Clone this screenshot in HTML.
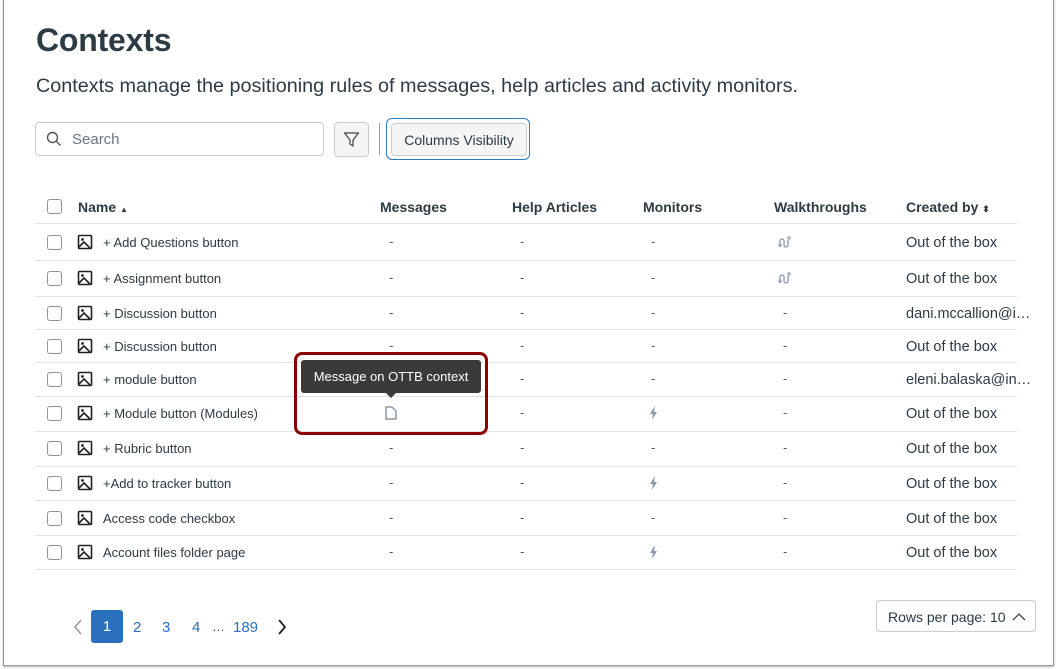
<!DOCTYPE html>
<html><head><style>
body{margin:0;width:1061px;height:669px;background:#fff;font-family:"Liberation Sans",sans-serif;color:#2d3b45;position:relative;overflow:hidden}
.frame{position:absolute;left:3px;top:-2px;width:1049px;height:667px;border:1px solid #9a9a9a;border-top:none;box-shadow:0 1px 2px rgba(0,0,0,.3)}
.a{position:absolute}
h1{position:absolute;left:36px;top:22px;margin:0;font-size:32px;font-weight:bold;color:#2d3b45;letter-spacing:-0.2px}
.sub{left:36px;top:75px;font-size:19.8px;color:#2d3b45}
.search{left:35px;top:122px;width:287px;height:32px;border:1px solid #c7cdd1;border-radius:4px}
.btn{border:1px solid #c7cdd1;border-radius:4px;background:#f5f5f5}
.hd{font-size:14px;font-weight:bold;top:199px}
.line{position:absolute;left:35px;width:982px;height:1px;background:#e0e3e6}
.cb{position:absolute;left:47px;width:13px;height:13px;border:1px solid #8b969e;border-radius:3px;background:#fff}
.txt{position:absolute;font-size:13px;color:#2d3b45}
.dash{position:absolute;font-size:13px;color:#555}
.cr{position:absolute;left:906px;font-size:14.5px;color:#2d3b45;white-space:nowrap;overflow:hidden;text-overflow:ellipsis;max-width:132px}
</style></head><body>
<div class="frame"></div>
<h1>Contexts</h1>
<div class="a sub">Contexts manage the positioning rules of messages, help articles and activity monitors.</div>
<div class="a search"><svg class="a" style="left:10px;top:8px" width="16" height="16" viewBox="0 0 16 16"><circle cx="6.5" cy="6.5" r="5" fill="none" stroke="#555" stroke-width="1.4"/><path d="M10 10l4.5 4.5" stroke="#555" stroke-width="1.4"/></svg><span class="a" style="left:36px;top:8px;font-size:15px;color:#6b7780">Search</span></div>
<div class="a btn" style="left:334px;top:122px;width:33px;height:33px"><svg class="a" style="left:8px;top:8px" width="17" height="17" viewBox="0 0 17 17"><path d="M1.5 2h14l-5.5 7v6l-3-2V9z" fill="none" stroke="#444" stroke-width="1.2" stroke-linejoin="round"/></svg></div>
<div class="a" style="left:379px;top:123px;width:1px;height:32px;background:#999"></div>
<div class="a" style="left:386px;top:118px;width:142px;height:40px;border:1.5px solid #2b7abc;border-radius:6px"></div>
<div class="a btn" style="left:391px;top:123px;width:134px;height:31px;font-size:14px;line-height:32px;text-align:center;color:#2d3b45">Columns Visibility</div>

<div class="cb" style="top:199px"></div>
<div class="a hd" style="left:78px">Name <span style="font-size:8px">▲</span></div>
<div class="a hd" style="left:380px">Messages</div>
<div class="a hd" style="left:512px">Help Articles</div>
<div class="a hd" style="left:643px">Monitors</div>
<div class="a hd" style="left:774px">Walkthroughs</div>
<div class="a hd" style="left:906px">Created by <span style="font-size:9px">⬍</span></div>

<div class="line" style="top:223px"></div>
<div class="line" style="top:260px"></div>
<div class="line" style="top:296px"></div>
<div class="line" style="top:329px"></div>
<div class="line" style="top:362px"></div>
<div class="line" style="top:396px"></div>
<div class="line" style="top:431px"></div>
<div class="line" style="top:466px"></div>
<div class="line" style="top:500px"></div>
<div class="line" style="top:535px"></div>
<div class="line" style="top:569px"></div>

<svg width="0" height="0" style="position:absolute"><defs><symbol id="img" viewBox="0 0 16 16"><rect x="1.5" y="1.5" width="13" height="13" rx="1" fill="none" stroke="#222" stroke-width="1.6"/><circle cx="5.5" cy="5.5" r="1.4" fill="#222"/><path d="M2 13l5-5 6 6" fill="none" stroke="#222" stroke-width="1.6"/></symbol>
<symbol id="bolt" viewBox="0 0 10 14"><path d="M6 0L1 8h3l-1 6 5-8H5z" fill="#8c96a8"/></symbol>
<symbol id="walk" viewBox="0 0 14 12"><path d="M2 10V5a2 2 0 014 0v4a2 2 0 004 0V4" fill="none" stroke="#8c96a8" stroke-width="1.3"/><circle cx="11" cy="2" r="1.2" fill="none" stroke="#8c96a8"/><path d="M0.5 8.5L2 10.5 3.5 8.5" fill="none" stroke="#8c96a8" stroke-width="1.2"/></symbol></defs></svg>

<div class="cb" style="top:235px"></div><svg class="a" style="left:77px;top:234px" width="16" height="16"><use href="#img"/></svg><div class="txt" style="left:103px;top:235px">+ Add Questions button</div><div class="dash" style="left:389px;top:234px">-</div><div class="dash" style="left:520px;top:234px">-</div><div class="dash" style="left:651px;top:234px">-</div><svg class="a" style="left:778px;top:236px" width="14" height="12"><use href="#walk"/></svg><div class="cr" style="top:235px">Out of the box</div>
<div class="cb" style="top:271px"></div><svg class="a" style="left:77px;top:270px" width="16" height="16"><use href="#img"/></svg><div class="txt" style="left:103px;top:271px">+ Assignment button</div><div class="dash" style="left:389px;top:270px">-</div><div class="dash" style="left:520px;top:270px">-</div><div class="dash" style="left:651px;top:270px">-</div><svg class="a" style="left:778px;top:272px" width="14" height="12"><use href="#walk"/></svg><div class="cr" style="top:271px">Out of the box</div>
<div class="cb" style="top:306px"></div><svg class="a" style="left:77px;top:305px" width="16" height="16"><use href="#img"/></svg><div class="txt" style="left:103px;top:306px">+ Discussion button</div><div class="dash" style="left:389px;top:305px">-</div><div class="dash" style="left:520px;top:305px">-</div><div class="dash" style="left:651px;top:305px">-</div><div class="dash" style="left:783px;top:305px">-</div><div class="cr" style="top:306px">dani.mccallion@instructure.com</div>
<div class="cb" style="top:339px"></div><svg class="a" style="left:77px;top:338px" width="16" height="16"><use href="#img"/></svg><div class="txt" style="left:103px;top:339px">+ Discussion button</div><div class="dash" style="left:389px;top:338px">-</div><div class="dash" style="left:520px;top:338px">-</div><div class="dash" style="left:651px;top:338px">-</div><div class="dash" style="left:783px;top:338px">-</div><div class="cr" style="top:339px">Out of the box</div>
<div class="cb" style="top:372px"></div><svg class="a" style="left:77px;top:371px" width="16" height="16"><use href="#img"/></svg><div class="txt" style="left:103px;top:372px">+ module button</div><div class="dash" style="left:520px;top:371px">-</div><div class="dash" style="left:651px;top:371px">-</div><div class="dash" style="left:783px;top:371px">-</div><div class="cr" style="top:372px">eleni.balaska@instructure.com</div>
<div class="cb" style="top:406px"></div><svg class="a" style="left:77px;top:405px" width="16" height="16"><use href="#img"/></svg><div class="txt" style="left:103px;top:406px">+ Module button (Modules)</div><svg class="a" style="left:385px;top:406px" width="12" height="14" viewBox="0 0 12 14"><path d="M1 1h6l4 4v8H1z" fill="none" stroke="#8c96a8" stroke-width="1.5" stroke-linejoin="round"/></svg><div class="dash" style="left:520px;top:405px">-</div><svg class="a" style="left:649px;top:406px" width="10" height="14"><use href="#bolt"/></svg><div class="dash" style="left:783px;top:405px">-</div><div class="cr" style="top:406px">Out of the box</div>
<div class="cb" style="top:441px"></div><svg class="a" style="left:77px;top:440px" width="16" height="16"><use href="#img"/></svg><div class="txt" style="left:103px;top:441px">+ Rubric button</div><div class="dash" style="left:389px;top:440px">-</div><div class="dash" style="left:520px;top:440px">-</div><div class="dash" style="left:651px;top:440px">-</div><div class="dash" style="left:783px;top:440px">-</div><div class="cr" style="top:441px">Out of the box</div>
<div class="cb" style="top:476px"></div><svg class="a" style="left:77px;top:475px" width="16" height="16"><use href="#img"/></svg><div class="txt" style="left:103px;top:476px">+Add to tracker button</div><div class="dash" style="left:389px;top:475px">-</div><div class="dash" style="left:520px;top:475px">-</div><svg class="a" style="left:649px;top:476px" width="10" height="14"><use href="#bolt"/></svg><div class="dash" style="left:783px;top:475px">-</div><div class="cr" style="top:476px">Out of the box</div>
<div class="cb" style="top:511px"></div><svg class="a" style="left:77px;top:510px" width="16" height="16"><use href="#img"/></svg><div class="txt" style="left:103px;top:511px">Access code checkbox</div><div class="dash" style="left:389px;top:510px">-</div><div class="dash" style="left:520px;top:510px">-</div><div class="dash" style="left:651px;top:510px">-</div><div class="dash" style="left:783px;top:510px">-</div><div class="cr" style="top:511px">Out of the box</div>
<div class="cb" style="top:545px"></div><svg class="a" style="left:77px;top:544px" width="16" height="16"><use href="#img"/></svg><div class="txt" style="left:103px;top:545px">Account files folder page</div><div class="dash" style="left:389px;top:544px">-</div><div class="dash" style="left:520px;top:544px">-</div><svg class="a" style="left:649px;top:545px" width="10" height="14"><use href="#bolt"/></svg><div class="dash" style="left:783px;top:544px">-</div><div class="cr" style="top:545px">Out of the box</div>

<div class="a" style="left:294px;top:352px;width:188px;height:77px;border:3px solid #8b0000;border-radius:8px"></div>
<div class="a" style="left:301px;top:360px;width:180px;height:33px;background:#3a3a3a;border-radius:3px;color:#fff;font-size:13px;line-height:33px;text-align:center">Message on OTTB context</div>
<div class="a" style="left:386px;top:393px;width:0;height:0;border-left:5px solid transparent;border-right:5px solid transparent;border-top:5px solid #3a3a3a"></div>

<svg class="a" style="left:73px;top:619px" width="10" height="16" viewBox="0 0 10 16"><path d="M8 1L2 8l6 7" fill="none" stroke="#999" stroke-width="1.6"/></svg>
<div class="a" style="left:91px;top:610px;width:32px;height:33px;background:#2b6fbf;border-radius:3px;color:#fff;font-size:15px;line-height:34px;text-align:center">1</div>
<div class="a" style="left:133px;top:619px;font-size:15px;color:#2b6fbf">2</div>
<div class="a" style="left:162px;top:619px;font-size:15px;color:#2b6fbf">3</div>
<div class="a" style="left:192px;top:619px;font-size:15px;color:#2b6fbf">4</div>
<div class="a" style="left:212px;top:619px;font-size:13px;color:#555">…</div>
<div class="a" style="left:233px;top:619px;font-size:15px;color:#2b6fbf">189</div>
<svg class="a" style="left:277px;top:619px" width="10" height="16" viewBox="0 0 10 16"><path d="M2 1l6 7-6 7" fill="none" stroke="#222" stroke-width="1.8"/></svg>
<div class="a" style="left:876px;top:600px;width:160px;height:32px;border:1px solid #c7cdd1;border-radius:4px;font-size:14px;line-height:32px;color:#2d3b45;padding-left:11px;box-sizing:border-box">Rows per page: 10 <svg style="position:absolute;left:135px;top:11px" width="14" height="10" viewBox="0 0 14 10"><path d="M1 8l6-6 6 6" fill="none" stroke="#444" stroke-width="1.3"/></svg></div>
</body></html>
